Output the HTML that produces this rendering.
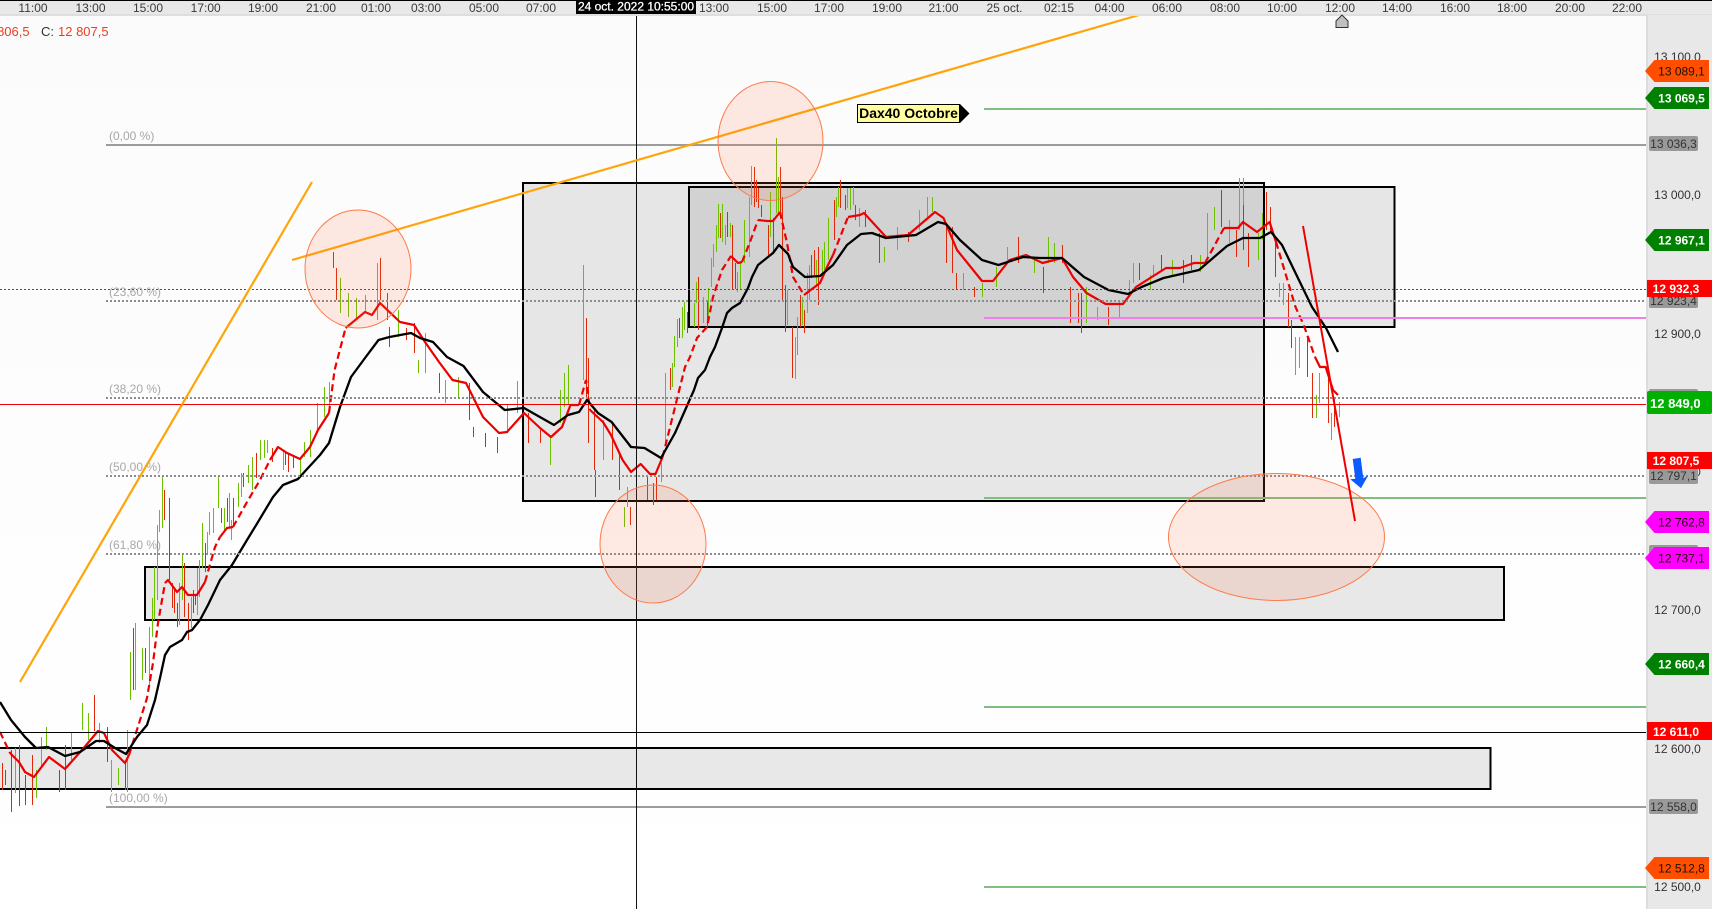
<!DOCTYPE html>
<html>
<head>
<meta charset="utf-8">
<style>
html,body{margin:0;padding:0;background:#fdfdfd;}
body{width:1712px;height:909px;overflow:hidden;position:relative;}
svg{position:absolute;left:0;top:0;display:block;font-family:"Liberation Sans",Arial,sans-serif;}
.t{font-size:12px;fill:#3a3a3a;text-anchor:middle;}
.g{font-size:12px;fill:#333;text-anchor:middle;}
.b{font-size:12px;font-weight:bold;text-anchor:middle;fill:#fff;}
.k{font-size:12px;text-anchor:middle;fill:#201000;}
.f{font-size:12px;fill:#a8a8a8;}
</style>
</head>
<body>
<svg width="1712" height="909" viewBox="0 0 1712 909" xmlns="http://www.w3.org/2000/svg">
<defs><linearGradient id="bg" x1="0" y1="0" x2="0" y2="1"><stop offset="0" stop-color="#fbfbfb"/><stop offset="1" stop-color="#ffffff"/></linearGradient></defs>
<rect x="0" y="0" width="1712" height="909" fill="url(#bg)"/>

<!-- zones -->
<g fill="rgba(0,0,0,0.085)" stroke="#000" stroke-width="2">
<rect x="523" y="183" width="741" height="318"/>
<rect x="689" y="187" width="705.5" height="140"/>
<rect x="145" y="567" width="1359" height="53"/>
<rect x="-5" y="748" width="1495.5" height="41"/>
</g>

<g transform="translate(0.5 0)">
<!-- green wicks -->
<path fill="none" stroke="#6cc000" stroke-width="1" shape-rendering="crispEdges" d="M15 748V793M36 770V798M41 737V767M46 727V750M71 732V760M82 703V730M88 713V740M99 723V743M111 760V792M118 768V785M127 730V792M130 652V700M135 623V690M142 648V680M149 627V685M152 598V637M154 567V620M157 525V600M159 510V532M162 477V528M179 583V625M182 555V600M191 597V628M197 568V615M199 560V597M202 523V568M207 532V555M209 512V535M213 508V533M218 477V508M224 508V532M229 493V528M231 520V540M238 483V507M241 473V497M248 465V483M252 457V490M260 440V460M264 440V458M267 440V453M283 450V470M300 460V478M304 442V457M310 430V457M317 403V433M324 387V417M329 382V407M340 278V313M348 293V317M356 298V320M365 295V313M377 263V320M398 310V337M425 333V373M418 360V373M445 380V403M458 377V397M507 405V433M517 381V413M550 437V465M560 390V423M564 373V407M568 365V405M583 265V380M603 420V460M624 507V527M627 487V507M661 463V482M665 373V443M672 363V387M674 336V367M677 319V347M682 307V338M684 302V330M694 303V327M696 282V303M703 297V323M708 288V320M711 258V287M713 244V267M716 225V252M718 204V238M722 204V242M725 225V245M730 223V237M737 272V292M740 263V290M744 220V263M749 197V257M751 166V205M770 192V237M776 138V213M778 177V213M787 290V325M795 337V379M797 317V355M802 297V325M807 273V313M809 265V300M816 260V285M822 250V277M824 242V270M828 218V260M836 197V217M838 187V207M847 188V208M850 188V210M853 187V205M859 208V227M884 247V262M897 227V250M919 210V230M927 197V217M932 197V212M963 273V290M982 283V297M996 267V287M1007 247V263M1034 257V273M1048 237V263M1054 243V263M1086 287V323M1097 307V320M1119 300V317M1129 280V297M1133 263V283M1150 275V290M1153 265V277M1172 260V275M1200 255V272M1207 213V260M1214 207V230M1229 220V243M1239 178V230M1243 178V227M1258 233V260M1262 213V240M1279 283V297M1283 283V305M1295 337V375M1299 337V368M1316 395V418M1319 373V403M1331 413V440M1339 402V417"/>
<!-- red wicks -->
<path fill="none" stroke="#e02808" stroke-width="1" shape-rendering="crispEdges" d="M2 763V790M5 770V785M11 750V812M19 745V806M25 775V805M32 755V805M59 770V792M65 745V790M94 695V731M107 727V762M125 763V790M133 628V690M145 648V673M164 490V520M169 498V580M172 583V608M174 587V613M177 603V627M184 563V617M188 603V640M193 590V613M195 595V605M205 543V572M221 508V523M227 498V522M233 498V527M243 473V487M256 453V478M272 448V462M285 452V465M288 453V472M293 455V468M333 252V268M336 268V300M380 258V300M387 293V320M389 327V347M406 328V340M414 323V353M439 373V393M469 383V420M473 427V437M485 433V447M497 437V453M528 413V443M540 430V443M586 318V400M588 358V443M594 410V470M595 470V497M612 423V460M619 453V490M630 507V525M647 477V500M653 483V505M656 477V500M670 368V390M679 318V338M687 312V333M698 277V330M707 302V327M720 213V238M727 212V237M732 225V290M735 263V289M754 167V207M756 180V202M758 188V208M761 205V217M768 225V255M773 218V253M780 167V217M782 197V300M785 285V332M792 327V378M800 295V327M804 310V333M811 255V278M814 250V275M818 247V305M834 200V240M840 180V208M845 195V210M855 205V220M865 210V227M879 233V263M908 232V242M946 223V263M952 227V273M956 273V290M974 287V297M1018 237V263M1043 267V293M1062 245V263M1070 287V323M1078 293V323M1081 293V333M1108 307V325M1139 263V280M1161 255V270M1183 260V283M1191 255V270M1221 190V227M1236 230V257M1243 205V250M1248 233V267M1266 192V230M1270 207V233M1275 240V277M1288 293V327M1291 320V348M1307 337V377M1312 373V418M1328 370V423M1334 397V427"/>
</g>

<!-- red moving average solid -->
<g fill="none" stroke="#ee0000" stroke-width="2.2" stroke-linejoin="round">
<polyline points="10,753 19,762 25,772 34,777 49,757 65,769 82,750 98,731 104,733 112,750 125,763 129,755"/>
<polyline points="165,583 168,580 177,592 182,587 188,595 197,595 205,582"/>
<polyline points="220,537 227,528 233,527"/>
<polyline points="270,460 278,447 287,453 300,459 310,447 318,430 329,413"/>
<polyline points="345.6,328 365,312 372,315 380,303 400,322 414,325 425,342 439,362 452.5,380 466,383 483,417 499,433 507,432 524,413 540,428 551,437 562,427 570.5,405 579,405"/>
<polyline points="590,410 603,422 611,435 622.6,460 631,472 640.7,464 650,474 655.5,474 662.6,457"/>
<polyline points="731,256 738,263 742,262"/>
<polyline points="758,220 767,221 773,221 780,212"/>
<polyline points="804,295 820,283 828,265 833,255"/>
<polyline points="848,217 860,215 864,213 875,225 886,237 908,235 935,212 943.5,218 957,250 982,281 993,281 1009.5,260 1026,255 1042.5,263 1062,258 1073,277 1086.5,293 1105.7,304 1123,304 1136,287 1166,268 1180,268 1194,263 1205,263"/>
<polyline points="1224,228 1238,228 1243,222 1257,232 1269.6,222 1276,242"/>
<polyline points="1315,357 1320,367 1325.7,367 1333,390 1338,395"/>
</g>
<!-- red moving average dashed -->
<g fill="none" stroke="#ee0000" stroke-width="2.2" stroke-dasharray="7 4">
<polyline points="0,732 10,753"/>
<polyline points="129,755 147,698 153,663 158,623 165,583"/>
<polyline points="205,582 215,547 220,537"/>
<polyline points="233,527 247,502 260,480 270,460"/>
<polyline points="329,413 334.6,370 345.6,328"/>
<polyline points="579,405 586,380 590,410"/>
<polyline points="662.6,457 680,387 685,367 690,357 697,338 707,327 713,297 722,270 731,256"/>
<polyline points="742,262 750,242 758,220"/>
<polyline points="780,212 787,243 793,277 804,295"/>
<polyline points="833,255 848,217"/>
<polyline points="1205,263 1224,228"/>
<polyline points="1276,242 1295.5,307 1303.7,325 1315,357"/>
</g>
<!-- black moving average -->
<polyline fill="none" stroke="#000" stroke-width="2.3" stroke-linejoin="round" points="0,702 11,720 25,737 36,748 48,747 65,756 80,752 96,741 104,741 115,748 126,754 137,737 147,725 155,700 160,678 165,655 170,647 182,640 187,632 192,630 200,620 208,605 220,580 232,565 247,540 258,522 273,497 283,485 298,479 308,468 320,455 329,443 340,407 351,377 365,358 378.5,340 389.5,337 411,333 420,338 433,342 447,357 463.5,366 483,392 504.7,410 524,408 554,425 568,415 579,412 587,400 598,413 611.6,422 631,447 644.5,448 661,458 675,433 694,390 698,378 705,370 710,357 715,347 722,328 727,313 732,308 740,303 748,288 752,277 758,265 768,257 773,253 779,245 788,254 793,267 805,277 820,276 833,265 847,245 861,234 872,233 886,238 916,235 938,222 946,224 960,240 982,260 998.5,265 1023,257 1040,258 1062,258 1084,277 1108.5,290 1128,294 1141.5,287 1163.5,278 1199,270 1227,246 1243,238 1260,238 1271,232 1282,245 1295.5,273 1312,307 1326,328 1338,352"/>

<!-- horizontal levels -->
<g fill="none" shape-rendering="crispEdges">
<path d="M106 145H1647M106 807H1647" stroke="#9c9c9c" stroke-width="2"/>
<path d="M106 301H1647M106 398H1647M106 476H1647M106 554H1647" stroke="#8c8c8c" stroke-width="2" stroke-dasharray="2 2"/>
<path d="M0 289.5H1647" stroke="#e81010" stroke-width="1" stroke-dasharray="2 2"/>
<path d="M0 404.5H1647" stroke="#f00000" stroke-width="1"/>
<path d="M0 732.5H1647" stroke="#000" stroke-width="1"/>
<path d="M984 109H1647M984 498H1647M984 707H1647M984 887H1647" stroke="#7fbf7f" stroke-width="2"/>
<path d="M984 318H1647" stroke="#f080e8" stroke-width="2"/>
<path d="M636.5 14V909" stroke="#111" stroke-width="1"/>
</g>

<!-- orange trend lines -->
<g stroke="#ffa40a" stroke-width="2.2" fill="none">
<line x1="20" y1="682" x2="312" y2="182"/>
<line x1="292" y1="260" x2="1139" y2="15"/>
</g>

<!-- ellipses -->
<g fill="rgba(255,110,60,0.14)" stroke="#ff7a4a" stroke-width="1">
<ellipse cx="358" cy="269" rx="53" ry="59"/>
<ellipse cx="770.5" cy="141" rx="52.5" ry="59.5"/>
<ellipse cx="653" cy="544" rx="53" ry="59"/>
<ellipse cx="1276.5" cy="537" rx="108" ry="63.5"/>
</g>

<!-- red trend line + arrow -->
<line x1="1303" y1="226" x2="1355" y2="521" stroke="#f00000" stroke-width="2"/>
<polygon points="1352.7,459 1360.7,457.7 1363.3,478.3 1368.3,475.3 1361,488.3 1350.3,479.3 1355.3,478.7" fill="#0a5cff"/>

<!-- OHLC text -->
<text x="-21" y="36" font-size="13" fill="#f23a1e">12 806,5</text>
<text x="41" y="36" font-size="13" fill="#333">C:</text>
<text x="58" y="36" font-size="13" fill="#f23a1e">12 807,5</text>

<!-- fib labels -->
<text class="f" x="109" y="140">(0,00 %)</text>
<text class="f" x="109" y="296">(23,60 %)</text>
<text class="f" x="109" y="393">(38,20 %)</text>
<text class="f" x="109" y="471">(50,00 %)</text>
<text class="f" x="109" y="549">(61,80 %)</text>
<text class="f" x="109" y="802">(100,00 %)</text>

<!-- Note -->
<polygon points="960,104 969.5,113.5 960,123" fill="#000"/>
<rect x="857.5" y="104.5" width="102" height="18" fill="#ffffa0" stroke="#000" stroke-width="1"/>
<text x="908.5" y="118" font-size="14" font-weight="bold" fill="#000" text-anchor="middle">Dax40 Octobre</text>

<!-- top time axis -->
<rect x="0" y="0" width="1712" height="15" fill="#e8e8e8"/>
<rect x="0" y="0" width="1712" height="1" fill="#000"/>
<rect x="0" y="14" width="1712" height="2" fill="#dedede"/>
<g class="t">
<text class="t" x="33" y="12">11:00</text><text class="t" x="90.5" y="12">13:00</text><text class="t" x="148" y="12">15:00</text><text class="t" x="205.7" y="12">17:00</text><text class="t" x="263" y="12">19:00</text><text class="t" x="321" y="12">21:00</text><text class="t" x="376" y="12">01:00</text><text class="t" x="426" y="12">03:00</text><text class="t" x="484" y="12">05:00</text><text class="t" x="541" y="12">07:00</text><text class="t" x="714" y="12">13:00</text><text class="t" x="772" y="12">15:00</text><text class="t" x="829" y="12">17:00</text><text class="t" x="887" y="12">19:00</text><text class="t" x="943.5" y="12">21:00</text><text class="t" x="1004.5" y="12">25 oct.</text><text class="t" x="1059" y="12">02:15</text><text class="t" x="1109.5" y="12">04:00</text><text class="t" x="1167" y="12">06:00</text><text class="t" x="1225" y="12">08:00</text><text class="t" x="1282" y="12">10:00</text><text class="t" x="1340" y="12">12:00</text><text class="t" x="1397" y="12">14:00</text><text class="t" x="1455" y="12">16:00</text><text class="t" x="1512" y="12">18:00</text><text class="t" x="1570" y="12">20:00</text><text class="t" x="1627" y="12">22:00</text>
</g>
<rect x="576" y="0" width="120" height="14" fill="#000"/>
<text x="636" y="10.5" font-size="12" fill="#fff" text-anchor="middle" stroke="#fff" stroke-width="0.3">24 oct. 2022 10:55:00</text>
<polygon points="1342,15 1348,21 1348,27.5 1336,27.5 1336,21" fill="#c0c0c0" stroke="#333" stroke-width="1"/>

<!-- right price axis -->
<rect x="1647" y="15" width="65" height="894" fill="#e8e8e8"/>
<rect x="1646" y="15" width="2" height="894" fill="#dcdcdc"/>
<g>
<text class="g" x="1677.5" y="61">13 100,0</text>
<text class="g" x="1677.5" y="199">13 000,0</text>
<text class="g" x="1677.5" y="338">12 900,0</text>
<text class="g" x="1677.5" y="476">12 800,0</text>
<text class="g" x="1677.5" y="614">12 700,0</text>
<text class="g" x="1677.5" y="753">12 600,0</text>
<text class="g" x="1677.5" y="891">12 500,0</text>
</g>
<!-- grey fib tags -->
<g fill="#999">
<rect x="1649" y="136" width="49" height="15" rx="2"/>
<rect x="1649" y="293" width="49" height="15" rx="2"/>
<rect x="1649" y="389" width="49" height="16" rx="2"/>
<rect x="1649" y="468" width="49" height="16" rx="2"/>
<rect x="1649" y="545" width="49" height="16" rx="2"/>
<rect x="1649" y="799" width="49" height="15" rx="2"/>
</g>
<g>
<text class="g" x="1673.5" y="148">13 036,3</text>
<text class="g" x="1673.5" y="305">12 923,4</text>
<text class="g" x="1673.5" y="480">12 797,1</text>
<text class="g" x="1673.5" y="811">12 558,0</text>
</g>
<!-- arrow tags -->
<polygon points="1645,71 1654.5,60 1709,60 1709,82 1654.5,82" fill="#ff4e00"/>
<text class="k" x="1681.5" y="75.5">13 089,1</text>
<polygon points="1645,98 1654.5,87 1709,87 1709,109 1654.5,109" fill="#008000"/>
<text class="b" x="1681.5" y="102.5">13 069,5</text>
<polygon points="1645,240 1654.5,229 1709,229 1709,251 1654.5,251" fill="#008000"/>
<text class="b" x="1681.5" y="244.5">12 967,1</text>
<polygon points="1645,522 1654.5,511 1709,511 1709,533 1654.5,533" fill="#ff00ff"/>
<text class="k" x="1681.5" y="526.5">12 762,8</text>
<polygon points="1645,558 1654.5,547 1709,547 1709,569 1654.5,569" fill="#ff00ff"/>
<text class="k" x="1681.5" y="562.5">12 737,1</text>
<polygon points="1645,664 1654.5,653 1709,653 1709,675 1654.5,675" fill="#008000"/>
<text class="b" x="1681.5" y="668.5">12 660,4</text>
<polygon points="1645,868 1654.5,857 1709,857 1709,879 1654.5,879" fill="#ff4e00"/>
<text class="k" x="1681.5" y="872.5">12 512,8</text>
<!-- red/green price boxes -->
<rect x="1647" y="280" width="65" height="17" fill="#ff0000"/>
<text class="b" x="1676" y="293">12 932,3</text>
<rect x="1647" y="452" width="65" height="17" fill="#ff0000"/>
<text class="b" x="1676" y="465">12 807,5</text>
<rect x="1647" y="722" width="65" height="18" fill="#ff0000"/>
<text class="b" x="1676" y="736">12 611,0</text>
<rect x="1647" y="391" width="65" height="23" rx="2" fill="#00b000"/>
<text x="1650" y="408" font-size="13" font-weight="bold" fill="#fff">12 849,0</text>
</svg>
</body>
</html>
